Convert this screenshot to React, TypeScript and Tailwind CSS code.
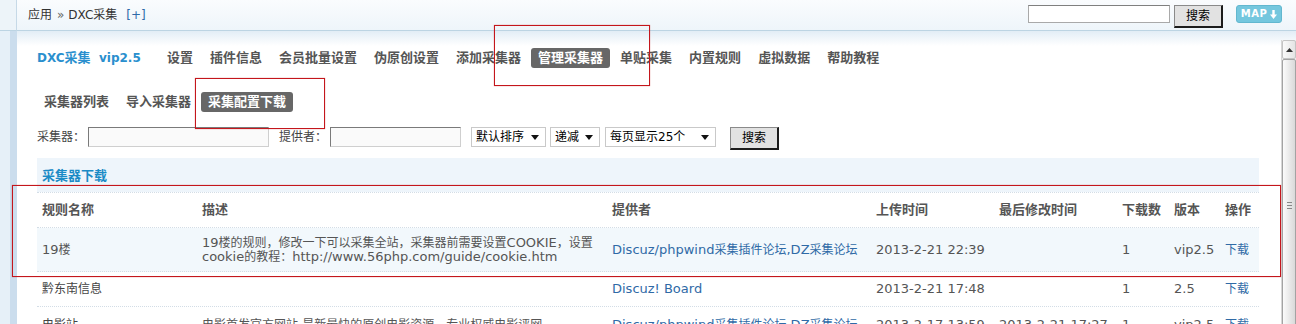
import React from "react";

const navItems = ["设置", "插件信息", "会员批量设置", "伪原创设置", "添加采集器", "管理采集器", "单贴采集", "内置规则", "虚拟数据", "帮助教程"];
const subItems = ["采集器列表", "导入采集器", "采集配置下载"];

const cols = "grid grid-cols-[160px_410px_264px_123px_123px_52px_51px_39px]";

const CJK = /([\u2E80-\u9FFF\u3000-\u303F\uFF00-\uFFEF]+)/;

// regular CJK runs render at 12px next to 13px latin text, as in the reference
function T({ s }: { s: string }) {
  const parts = s.split(CJK);
  return (
    <>
      {parts.map((p, i) =>
        i % 2 === 1 ? (
          <span key={i} className="text-[12px]">{p}</span>
        ) : (
          <React.Fragment key={i}>{p}</React.Fragment>
        )
      )}
    </>
  );
}

function Select({ w, label }: { w: string; label: string }) {
  return (
    <div className={`${w} h-[20px] flex items-center justify-between border border-[#c9c9c9] bg-white pl-[4px] pr-[6px] text-black leading-[18px]`}>
      <span className="whitespace-nowrap"><T s={label} /></span>
      <svg width="8" height="5" viewBox="0 0 8 5"><polygon points="0,0 8,0 4,5" fill="#111" /></svg>
    </div>
  );
}

function Btn({ label }: { label: string }) {
  return (
    <button className="w-[49px] h-[23px] bg-[#e2e2e2] border-t-[1px] border-l-[1px] border-r-[2px] border-b-[2px] border-t-[#8a8a8a] border-l-[#8a8a8a] border-r-[#1c1c1c] border-b-[#1c1c1c] text-black text-[12px] leading-[18px] flex items-center justify-center">
      {label}
    </button>
  );
}

const link = "text-[#2f6aa6]";

export default function App() {
  return (
    <div className="relative w-[1296px] h-[324px] overflow-hidden bg-white font-['DejaVu_Sans','Noto_Sans_CJK_SC',sans-serif] text-[13px] text-[#555]">
      {/* top header */}
      <div className="flex h-[31px]">
        <div className="w-[17px] shrink-0 bg-[#edf4f9] border-r border-r-[#c6d9e7] border-b border-b-[#bcd4e3]" />
        <div className="flex-1 flex items-start justify-between border-b border-b-[#bcd4e3] bg-[linear-gradient(#fafcfe,#eef5fa)]">
          <div className="pl-[11px] h-[30px] flex items-center text-[12px] text-[#333]">
            <span>应用</span>
            <span className="ml-[5px] text-[#666]">»</span>
            <span className="ml-[4px]">DXC采集</span>
            <span className="ml-[9px] text-[#2e6aa8]">[+]</span>
          </div>
          <div className="flex items-start pt-[5px] pr-[14px]">
            <div className="w-[142px] h-[18px] bg-white border border-[#a9a9a9] border-t-[#7f7f7f]" />
            <div className="ml-[4px]"><Btn label="搜索" /></div>
            <div className="ml-[13px] w-[46px] h-[18px] rounded-[3px] bg-[#74c7de] border border-[#62b7cf] flex items-center justify-center gap-[3px] text-white text-[10px] font-bold tracking-[0.5px] leading-none">
              <span>MAP</span>
              <svg width="7" height="9" viewBox="0 0 7 9"><rect x="2.3" y="0" width="2.4" height="5" fill="#fff" /><polygon points="0,4.5 7,4.5 3.5,9" fill="#fff" /></svg>
            </div>
          </div>
        </div>
      </div>

      {/* body */}
      <div className="flex h-[293px]">
        <div className="w-[17px] shrink-0 flex">
          <div className="w-[10px] bg-[#e6f0f8]" />
          <div className="w-[7px] bg-[#cbdded]" />
        </div>
        <div className="flex-1 flex flex-col bg-[linear-gradient(#e2edf6,#ffffff_15px)]">
          <div className="h-[9px] shrink-0" />
          <div className="flex flex-1 min-h-0">
            <div className="flex-1 pl-[20px] pr-[22px] pt-[8px]">
              {/* main nav */}
              <div className="flex items-center h-[20px]">
                <div className="w-[123px] font-bold text-[#2a8fce] whitespace-nowrap text-[12px]">
                  DXC<span className="text-[13px]">采集</span>&nbsp; vip2.5
                </div>
                <div className="flex gap-[3px]">
                  {navItems.map((n, i) => (
                    <div
                      key={n}
                      className={
                        i === 5
                          ? "h-[20px] px-[7px] rounded-[3px] bg-[#676767] text-white font-bold leading-[20px] whitespace-nowrap"
                          : "h-[20px] px-[7px] font-bold text-[#555] leading-[20px] whitespace-nowrap"
                      }
                    >
                      {n}
                    </div>
                  ))}
                </div>
              </div>

              {/* sub nav */}
              <div className="flex gap-[3px] mt-[24px] h-[20px]">
                {subItems.map((n, i) => (
                  <div
                    key={n}
                    className={
                      i === 2
                        ? "h-[20px] px-[7px] rounded-[3px] bg-[#676767] text-white font-bold leading-[20px] whitespace-nowrap"
                        : "h-[20px] px-[7px] font-bold text-[#555] leading-[20px] whitespace-nowrap"
                    }
                  >
                    {n}
                  </div>
                ))}
              </div>

              {/* filter row */}
              <div className="flex items-start mt-[15px] h-[23px] text-[#444] text-[12px]">
                <span className="w-[51px] leading-[20px] whitespace-nowrap">采集器：</span>
                <div className="w-[181px] h-[20px] bg-[#fafafa] border border-[#cfcfcf] border-t-[#7a7a7a] border-l-[#7a7a7a]" />
                <span className="ml-[10px] w-[51px] leading-[20px] whitespace-nowrap">提供者：</span>
                <div className="w-[131px] h-[20px] bg-[#fafafa] border border-[#cfcfcf] border-t-[#7a7a7a] border-l-[#7a7a7a]" />
                <div className="ml-[10px]"><Select w="w-[75px]" label="默认排序" /></div>
                <div className="ml-[4px]"><Select w="w-[50px]" label="递减" /></div>
                <div className="ml-[5px]"><Select w="w-[111px]" label="每页显示25个" /></div>
                <div className="ml-[14px]"><Btn label="搜索" /></div>
              </div>

              {/* section header */}
              <div className="mt-[8px] h-[34px] bg-[#eef5fb] flex items-center pl-[5px] pt-[2px] font-bold text-[#1b8bc6]">
                采集器下载
              </div>

              {/* table header */}
              <div className={`${cols} h-[36px] items-center border-t border-b border-dotted border-[#d3dde6] font-bold text-[#555]`}>
                {["规则名称", "描述", "提供者", "上传时间", "最后修改时间", "下载数", "版本", "操作"].map((h) => (
                  <div key={h} className="px-[5px] whitespace-nowrap">{h}</div>
                ))}
              </div>

              {/* row 1 */}
              <div className={`${cols} h-[44px] items-center border-b border-dotted border-[#d3dde6] bg-[#f2f8fc]`}>
                <div className="px-[5px] whitespace-nowrap"><T s="19楼" /></div>
                <div className="px-[5px] leading-[14px] whitespace-nowrap">
                  <T s="19楼的规则，修改一下可以采集全站，采集器前需要设置COOKIE，设置" />
                  <br />
                  <T s="cookie的教程：http://www.56php.com/guide/cookie.htm" />
                </div>
                <div className={`px-[5px] whitespace-nowrap ${link}`}><T s="Discuz/phpwind采集插件论坛,DZ采集论坛" /></div>
                <div className="px-[5px] whitespace-nowrap">2013-2-21 22:39</div>
                <div className="px-[5px]"></div>
                <div className="px-[5px]">1</div>
                <div className="px-[5px]">vip2.5</div>
                <div className={`px-[5px] whitespace-nowrap text-[12px] ${link}`}>下载</div>
              </div>

              {/* row 2 */}
              <div className={`${cols} h-[35px] items-center border-b border-dotted border-[#d3dde6]`}>
                <div className="px-[5px] whitespace-nowrap text-[#444] text-[12px]">黔东南信息</div>
                <div className="px-[5px]"></div>
                <div className={`px-[5px] whitespace-nowrap ${link}`}>Discuz! Board</div>
                <div className="px-[5px] whitespace-nowrap">2013-2-21 17:48</div>
                <div className="px-[5px]"></div>
                <div className="px-[5px]">1</div>
                <div className="px-[5px]">2.5</div>
                <div className={`px-[5px] whitespace-nowrap text-[12px] ${link}`}>下载</div>
              </div>

              {/* row 3 */}
              <div className={`${cols} h-[36px] items-center border-b border-dotted border-[#d3dde6]`}>
                <div className="px-[5px] whitespace-nowrap text-[#444] text-[12px]">电影站</div>
                <div className="px-[5px] whitespace-nowrap overflow-hidden"><T s="电影首发官方网站,是新最快的原创电影资源，专业权威电影评网" /></div>
                <div className={`px-[5px] whitespace-nowrap ${link}`}><T s="Discuz/phpwind采集插件论坛,DZ采集论坛" /></div>
                <div className="px-[5px] whitespace-nowrap">2013-2-17 13:59</div>
                <div className="px-[5px] whitespace-nowrap">2013-2-21 17:27</div>
                <div className="px-[5px]">1</div>
                <div className="px-[5px]">vip2.5</div>
                <div className={`px-[5px] whitespace-nowrap text-[12px] ${link}`}>下载</div>
              </div>
            </div>

            {/* scrollbar */}
            <div className="w-[15px] shrink-0 flex flex-col bg-[#efefef] border-l border-l-[#d6d6d6]">
              <div className="h-[19px] shrink-0 flex items-center justify-center bg-[linear-gradient(90deg,#fafafa,#e4e4e4)] border border-[#c4c4c4] rounded-[2px]">
                <svg width="7" height="4" viewBox="0 0 7 4"><polygon points="0,4 7,4 3.5,0" fill="#333" /></svg>
              </div>
              <div className="h-[300px] shrink-0 flex flex-col items-center pt-[142px] bg-[linear-gradient(90deg,#fbfbfb,#d9d9d9)] border border-[#a3a3a3] rounded-[2px]">
                <div className="w-[5px] h-[1px] bg-[#888]" />
                <div className="w-[5px] h-[1px] bg-[#888] mt-[2px]" />
                <div className="w-[5px] h-[1px] bg-[#888] mt-[2px]" />
              </div>
            </div>
          </div>
        </div>
      </div>

      {/* red annotation boxes */}
      <div className="absolute left-[494px] top-[25px] w-[156px] h-[61px] border border-[#c4161c] shadow-[0_0_1px_rgba(200,30,30,0.6)]" />
      <div className="absolute left-[195px] top-[78px] w-[130px] h-[51px] border border-[#c4161c] shadow-[0_0_1px_rgba(200,30,30,0.6)]" />
      <div className="absolute left-[12px] top-[185px] w-[1269px] h-[92px] border border-[#c4161c] shadow-[0_0_1px_rgba(200,30,30,0.6)]" />
    </div>
  );
}
